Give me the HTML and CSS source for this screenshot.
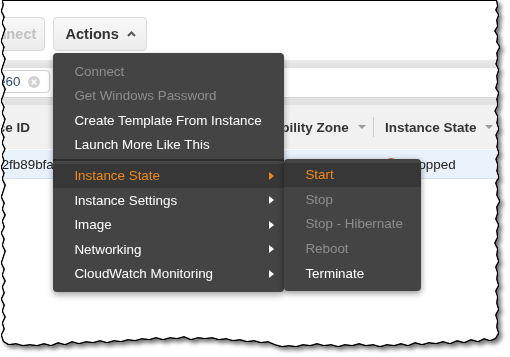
FILE: index.html
```html
<!DOCTYPE html>
<html lang="en">
<head>
  <meta charset="UTF-8">
  <meta name="viewport" content="width=device-width, initial-scale=1.0">
  <title>Instances - Actions</title>
  <link rel="stylesheet" href="styles.css">
</head>
<body>

  <div class="paper">
    <div class="sheet">

      <div class="toolbar">
        <button type="button" class="btn btn-connect" disabled>Connect</button>
        <div class="actions">
          <button type="button" class="btn btn-actions">
            Actions
            <svg class="caret" width="9" height="6" viewBox="0 0 9 6"><polyline points="1,5 4.5,1.5 8,5" fill="none" stroke="#555" stroke-width="2"/></svg>
          </button>

          <ul class="menu">
            <li class="menu-item is-disabled">Connect</li>
            <li class="menu-item is-disabled">Get Windows Password</li>
            <li class="menu-item">Create Template From Instance</li>
            <li class="menu-item">Launch More Like This</li>
            <li class="menu-sep"></li>
            <li class="menu-item is-open">
              <span>Instance State</span><span class="arrow"></span>
              <ul class="submenu">
                <li class="menu-item is-active">Start</li>
                <li class="menu-item is-disabled">Stop</li>
                <li class="menu-item is-disabled">Stop - Hibernate</li>
                <li class="menu-item is-disabled">Reboot</li>
                <li class="menu-item">Terminate</li>
              </ul>
            </li>
            <li class="menu-item"><span>Instance Settings</span><span class="arrow"></span></li>
            <li class="menu-item"><span>Image</span><span class="arrow"></span></li>
            <li class="menu-item"><span>Networking</span><span class="arrow"></span></li>
            <li class="menu-item"><span>CloudWatch Monitoring</span><span class="arrow"></span></li>
          </ul>
        </div>
      </div>

      <div class="strip"></div>

      <div class="filter-bar">
        <span class="tag">
          i-0c4e60
          <svg class="tag-x" width="12" height="12" viewBox="0 0 12 12"><circle cx="6" cy="6" r="6" fill="#d2d2d2"/><path d="M3.8 3.8 L8.2 8.2 M8.2 3.8 L3.8 8.2" stroke="#fff" stroke-width="1.6"/></svg>
        </span>
      </div>

      <div class="grid">
        <div class="grid-top"></div>
        <div class="grid-head">
          <div class="th col-id"><span>Instance ID</span><span class="sort"></span></div>
          <div class="th col-type"><span>Instance Type</span><span class="sort"></span></div>
          <div class="th col-az"><span>Availability Zone</span><span class="sort"></span></div>
          <div class="th col-state"><span>Instance State</span><span class="sort"></span></div>
        </div>
        <div class="grid-row">
          <div class="td col-id">i-0b1f3c2fb89bfa53e</div>
          <div class="td col-type">t2.micro</div>
          <div class="td col-az">us-east-1a</div>
          <div class="td col-state"><span class="status-dot"></span>stopped</div>
        </div>
      </div>

    </div>
  </div>

</body>
</html>
```

FILE: styles.css
```css
body {
  margin: 0;
  background: #fff;
  font-family: "Liberation Sans", Arial, sans-serif;
}

ul {
  list-style: none;
  margin: 0;
  padding: 0;
}

/* torn paper frame */
.paper {
  width: 510px;
  height: 357px;
  filter: drop-shadow(1px 0 0 #000) drop-shadow(-1px 0 0 #000) drop-shadow(0 1px 0 #000) drop-shadow(0 -1px 0 #000) drop-shadow(3px 3px 2px rgba(0, 0, 0, 0.55));
}

.sheet {
  position: relative;
  width: 510px;
  height: 357px;
  overflow: hidden;
  background: #fff;
  clip-path: polygon(3px 1px, 496px 1px,
    497px 6px, 495px 10px, 498px 15px, 496px 20px, 497px 26px, 494px 31px, 497px 36px, 496px 42px, 499px 47px, 496px 53px,
    497px 58px, 495px 64px, 498px 70px, 496px 76px, 497px 82px, 495px 88px, 498px 93px, 496px 99px, 497px 105px, 494px 111px,
    497px 117px, 496px 123px, 498px 129px, 495px 135px, 497px 141px, 496px 147px, 498px 153px, 495px 159px, 497px 165px,
    496px 171px, 498px 177px, 495px 183px, 497px 189px, 496px 195px, 499px 201px, 496px 207px, 497px 213px, 495px 219px,
    498px 225px, 496px 231px, 497px 237px, 494px 243px, 497px 249px, 496px 255px, 498px 261px, 495px 267px, 497px 273px,
    496px 279px, 498px 285px, 495px 291px, 497px 297px, 496px 303px, 498px 309px, 495px 315px, 497px 321px, 496px 327px,
    498px 333px, 495px 338px,
    490px 340px, 484px 338px, 478px 341px, 471px 339px, 464px 342px, 457px 340px, 450px 343px, 443px 341px, 436px 343px,
    429px 342px, 422px 344px, 415px 342px, 408px 345px, 401px 343px, 394px 345px, 387px 344px, 380px 346px, 373px 344px,
    366px 345px, 359px 343px, 352px 345px, 345px 344px, 338px 346px, 331px 344px, 324px 345px, 317px 343px, 310px 345px,
    303px 344px, 296px 346px, 289px 345px, 282px 346px, 275px 344px, 268px 341px, 261px 342px, 254px 340px, 247px 341px,
    240px 339px, 233px 340px, 226px 338px, 219px 339px, 212px 337px, 205px 338px, 198px 337px, 191px 339px, 184px 336px,
    177px 338px, 170px 337px, 163px 339px, 156px 337px, 149px 339px, 142px 338px, 135px 340px, 128px 339px, 121px 341px,
    114px 340px, 107px 342px, 100px 340px, 93px 342px, 86px 341px, 79px 343px, 72px 341px, 65px 344px, 58px 342px,
    51px 345px, 44px 343px, 37px 345px, 30px 344px, 23px 345px, 16px 343px, 9px 344px, 4px 341px,
    2px 335px, 5px 329px, 3px 323px, 6px 317px, 3px 311px, 5px 305px, 2px 299px, 5px 293px, 3px 287px, 6px 281px,
    3px 275px, 5px 269px, 2px 263px, 4px 257px, 6px 251px, 3px 245px, 5px 239px, 2px 233px, 5px 227px, 3px 221px,
    6px 215px, 3px 209px, 5px 203px, 2px 197px, 4px 191px, 6px 185px, 3px 179px, 5px 173px, 2px 167px, 5px 161px,
    3px 155px, 6px 149px, 3px 143px, 5px 137px, 2px 131px, 4px 125px, 6px 119px, 3px 113px, 5px 107px, 2px 101px,
    4px 95px, 6px 89px, 3px 83px, 5px 77px, 2px 71px, 4px 65px, 6px 59px, 3px 53px, 5px 47px, 2px 41px,
    4px 35px, 6px 29px, 3px 23px, 5px 17px, 2px 11px, 4px 5px);
}

/* toolbar */
.toolbar {
  display: flex;
  gap: 8px;
  height: 60px;
  padding-top: 17px;
  box-sizing: border-box;
}

.btn {
  display: flex;
  align-items: center;
  height: 34px;
  padding: 0 10px;
  border: 1px solid #d9d9d9;
  border-radius: 4px;
  background: linear-gradient(#f8f8f8, #ececec);
  font: bold 14.6px "Liberation Sans", Arial, sans-serif;
  color: #333;
}

.btn-connect {
  margin-left: -33px;
  padding: 0 8px 0 10px;
  color: #c2c2c2;
}

.btn-actions {
  gap: 8px;
  padding: 0 10px 0 11px;
}

.actions {
  position: relative;
}

/* dropdown menu */
.menu {
  position: absolute;
  top: 36px;
  left: 0;
  z-index: 5;
  width: 231px;
  padding: 6px 0;
  background: #444;
  border-radius: 4px;
  box-shadow: 0 3px 6px rgba(0, 0, 0, 0.35);
}

.menu-item {
  position: relative;
  display: flex;
  align-items: center;
  justify-content: space-between;
  height: 24.5px;
  padding: 0 10px 0 21px;
  font-size: 13.4px;
  color: #fff;
  white-space: nowrap;
}

.menu-item.is-disabled {
  color: #8e8e8e;
}

.menu-item.is-open,
.menu-item.is-active {
  background: #373737;
  color: #f08a1d;
}

.menu-sep {
  height: 2px;
  margin: 2px 0 2.5px;
  background: #2c2c2c;
}

.arrow {
  width: 0;
  height: 0;
  border-left: 5px solid #fff;
  border-top: 4px solid transparent;
  border-bottom: 4px solid transparent;
}

.is-open .arrow {
  border-left-color: #f08a1d;
}

.submenu {
  position: absolute;
  top: -5px;
  left: 231px;
  width: 137px;
  padding: 4px 0 6px;
  background: #444;
  border-radius: 4px;
  box-shadow: 0 2px 6px rgba(0, 0, 0, 0.45);
}

.submenu .menu-item {
  height: 24.6px;
}

/* filter row */
.strip {
  height: 8px;
  background: linear-gradient(#ececec, #dedede);
}

.filter-bar {
  display: flex;
  height: 29px;
  padding-top: 2px;
  box-sizing: border-box;
}

.tag {
  display: flex;
  align-items: center;
  gap: 8px;
  height: 23px;
  margin-left: -40px;
  padding: 0 9px 0 8px;
  border: 1px solid #cfcfcf;
  border-radius: 4px;
  box-sizing: border-box;
  font-size: 13.4px;
  color: #2a4c70;
}

/* instances grid */
.grid {
  margin-left: -52px;
  width: 620px;
}

.grid-top {
  height: 7px;
  border-top: 1px solid #d4d4d4;
  background: #e2e2e2;
}

.grid-head {
  display: flex;
  align-items: center;
  height: 44px;
  background: #f1f1f1;
}

.grid-row {
  display: flex;
  align-items: center;
  height: 28px;
  border-top: 1px solid #fff;
  border-bottom: 1px solid #d6dee9;
  background: #e9f1fb;
}

.col-id { width: 172px; }
.col-type { width: 112px; }
.col-az { width: 142px; }
.col-state { width: 140px; }

.th {
  display: flex;
  align-items: center;
  justify-content: space-between;
  height: 20px;
  padding: 0 7px 0 10px;
  border-right: 1px solid #cdcdcd;
  box-sizing: border-box;
  font-weight: bold;
  font-size: 13.5px;
  color: #333;
}

.col-state.th {
  padding-left: 11px;
  padding-right: 20px;
}

.sort {
  width: 0;
  height: 0;
  border-top: 4px solid #9a9a9a;
  border-left: 4px solid transparent;
  border-right: 4px solid transparent;
}

.td {
  display: flex;
  align-items: center;
  padding-left: 10px;
  box-sizing: border-box;
  font-size: 13.4px;
  color: #222;
  white-space: nowrap;
  overflow: hidden;
}

.col-id.td {
  padding-left: 6px;
}

.col-state.td {
  padding-left: 11px;
  gap: 11px;
}

.status-dot {
  width: 12px;
  height: 12px;
  border-radius: 50%;
  background: #d9534f;
}
```
